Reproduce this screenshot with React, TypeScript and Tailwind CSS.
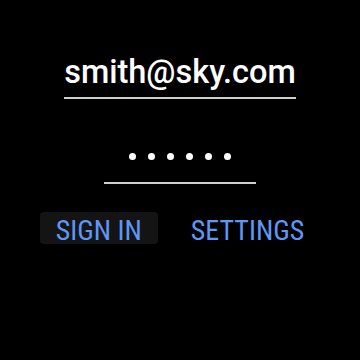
import React from 'react';

const App: React.FC = () => {
  const dots = [0, 1, 2, 3, 4, 5];

  return (
    <div className="w-[360px] h-[360px] bg-black flex flex-col items-center pt-[52px] font-['Roboto',sans-serif]">
      {/* email */}
      <div className="w-[232px] text-center text-white text-[32.5px] font-medium leading-[40px] pb-[5px] border-b-2 border-[#cfcfcf] whitespace-nowrap">
        smith@sky.com
      </div>

      {/* password */}
      <div className="mt-[54px] w-[152px] flex justify-center gap-[12px] pb-[22px] border-b-2 border-[#cfcfcf]">
        {dots.map((d) => (
          <span key={d} className="w-[7px] h-[7px] rounded-full bg-white" />
        ))}
      </div>

      {/* actions */}
      <div className="mt-[28px] flex gap-[17px]">
        <button className="h-[32px] px-[16px] rounded-[4px] bg-[#141414] text-[#5e97f6] text-[28px] leading-[38px] font-stretch-condensed whitespace-nowrap">
          SIGN IN
        </button>
        <button className="h-[32px] px-[16px] rounded-[4px] text-[#5e97f6] text-[28px] leading-[38px] font-stretch-condensed whitespace-nowrap">
          SETTINGS
        </button>
      </div>
    </div>
  );
};

export default App;
